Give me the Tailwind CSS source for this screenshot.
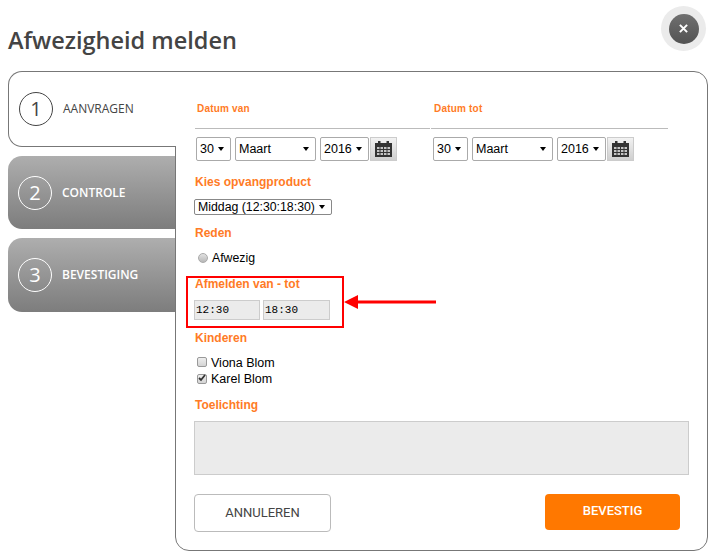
<!DOCTYPE html>
<html lang="en">
<head>
  <meta charset="UTF-8" />
  <title>Afwezigheid melden</title>
  <script src="https://cdn.jsdelivr.net/npm/@tailwindcss/browser@4"></script>
</head>
<body class="bg-white h-[558px] w-[709px] overflow-hidden relative font-['Liberation_Sans',sans-serif] text-black">

  <!-- Close button -->
  <button class="absolute left-[661px] top-[6px] w-[45px] h-[45px] rounded-full bg-[#ebebeb] flex items-center justify-center">
    <span class="w-[30px] h-[30px] rounded-full bg-gradient-to-b from-[#707070] to-[#525252] flex items-center justify-center">
      <svg class="w-[9px] h-[9px]" viewBox="0 0 10 10" fill="none" stroke="#fff" stroke-width="2.2"><path d="M1 1l8 8M9 1l-8 8" /></svg>
    </span>
  </button>

  <h1 class="pl-2 pt-[24px] h-[71px] font-['Open_Sans',sans-serif] text-[23.5px] leading-[32px] font-semibold text-[#444]">Afwezigheid melden</h1>

  <div class="flex pl-2">
    <!-- Steps -->
    <div class="w-[167px] shrink-0 relative z-10">
      <div class="h-[76px] -mb-px w-[168px] flex items-center gap-[10px] pl-[10px] bg-white border border-r-0 border-[#777] rounded-l-[14px] rounded-tr-none">
        <span class="w-[34px] h-[34px] rounded-full border border-[#444] flex items-center justify-center font-['Open_Sans',sans-serif] text-[20px] text-[#444]">1</span>
        <span class="font-['Open_Sans',sans-serif] text-[12px] text-[#444]">AANVRAGEN</span>
      </div>
      <div class="mt-[10px] h-[73px] flex items-center gap-[10px] pl-[10px] rounded-l-[14px] bg-gradient-to-b from-[#aeaeae] to-[#7d7d7d]">
        <span class="w-[34px] h-[34px] rounded-full border border-white flex items-center justify-center font-['Open_Sans',sans-serif] text-[20px] text-white">2</span>
        <span class="font-['Open_Sans',sans-serif] text-[12px] font-semibold text-white">CONTROLE</span>
      </div>
      <div class="mt-[9px] h-[74px] flex items-center gap-[10px] pl-[10px] rounded-l-[14px] bg-gradient-to-b from-[#aeaeae] to-[#7d7d7d]">
        <span class="w-[34px] h-[34px] rounded-full border border-white flex items-center justify-center font-['Open_Sans',sans-serif] text-[20px] text-white">3</span>
        <span class="font-['Open_Sans',sans-serif] text-[12px] font-semibold text-white">BEVESTIGING</span>
      </div>
    </div>

    <!-- Form panel -->
    <div class="relative w-[533px] h-[480px] border border-[#777] rounded-[14px] rounded-tl-none pl-[18px]">

      <!-- Dates -->
      <div class="flex mt-[28px]">
        <div class="w-[235px] mr-px ml-px">
          <div class="h-[29px] pl-[2px] pt-[1px] border-b border-[#bbb] text-[10px] leading-[16px] font-bold tracking-[0.2px] text-[#ff7b26]">Datum van</div>
          <div class="flex items-center mt-[8px] pl-px">
            <span class="relative block">
              <select disabled class="appearance-none opacity-100 block w-[35px] h-[24px] border border-[#aaa] rounded-[2px] bg-white text-[12.5px] text-black pl-[3px]"><option>30</option></select>
              <svg class="absolute right-[7px] top-[10px] w-[6px] h-[4px]" viewBox="0 0 6 4"><path d="M0 0h6L3 4z" /></svg>
            </span>
            <span class="relative block ml-[4px]">
              <select disabled class="appearance-none opacity-100 block w-[81px] h-[24px] border border-[#aaa] rounded-[2px] bg-white text-[12.5px] text-black pl-[3px]"><option>Maart</option></select>
              <svg class="absolute right-[7px] top-[10px] w-[6px] h-[4px]" viewBox="0 0 6 4"><path d="M0 0h6L3 4z" /></svg>
            </span>
            <span class="relative block ml-[4px]">
              <select disabled class="appearance-none opacity-100 block w-[49px] h-[24px] border border-[#aaa] rounded-[2px] bg-white text-[12.5px] text-black pl-[3px]"><option>2016</option></select>
              <svg class="absolute right-[7px] top-[10px] w-[6px] h-[4px]" viewBox="0 0 6 4"><path d="M0 0h6L3 4z" /></svg>
            </span>
            <span class="ml-[1px] w-[27px] h-[24px] -mt-[1px] border border-[#ccc] bg-gradient-to-b from-[#f2f2f2] to-[#cfcfcf] flex items-center justify-center">
              <svg class="w-[17px] h-[16px]" viewBox="0 0 17 16"><path fill="#333" d="M0 2h17v14H0z" /><path fill="#333" d="M3 0h2.500v3H3zM11.500 0H14v3h-2.500z" /><path fill="#c4c4c4" d="M2 6h2.500v2H2zM5.500 6H8v2H5.500zM9 6h2.500v2H9zM12.500 6H15v2h-2.500zM2 9h2.500v2H2zM5.500 9H8v2H5.500zM9 9h2.500v2H9zM12.500 9H15v2h-2.500zM2 12h2.500v2H2zM5.500 12H8v2H5.500zM9 12h2.500v2H9zM12.500 12H15v2h-2.500z" /></svg>
            </span>
          </div>
        </div>
        <div class="w-[237px]">
          <div class="h-[29px] pl-[3px] pt-[1px] border-b border-[#bbb] text-[10px] leading-[16px] font-bold tracking-[0.2px] text-[#ff7b26]">Datum tot</div>
          <div class="flex items-center mt-[8px] pl-[2px]">
            <span class="relative block">
              <select disabled class="appearance-none opacity-100 block w-[35px] h-[24px] border border-[#aaa] rounded-[2px] bg-white text-[12.5px] text-black pl-[3px]"><option>30</option></select>
              <svg class="absolute right-[7px] top-[10px] w-[6px] h-[4px]" viewBox="0 0 6 4"><path d="M0 0h6L3 4z" /></svg>
            </span>
            <span class="relative block ml-[4px]">
              <select disabled class="appearance-none opacity-100 block w-[81px] h-[24px] border border-[#aaa] rounded-[2px] bg-white text-[12.5px] text-black pl-[3px]"><option>Maart</option></select>
              <svg class="absolute right-[7px] top-[10px] w-[6px] h-[4px]" viewBox="0 0 6 4"><path d="M0 0h6L3 4z" /></svg>
            </span>
            <span class="relative block ml-[4px]">
              <select disabled class="appearance-none opacity-100 block w-[49px] h-[24px] border border-[#aaa] rounded-[2px] bg-white text-[12.5px] text-black pl-[3px]"><option>2016</option></select>
              <svg class="absolute right-[7px] top-[10px] w-[6px] h-[4px]" viewBox="0 0 6 4"><path d="M0 0h6L3 4z" /></svg>
            </span>
            <span class="ml-[1px] w-[27px] h-[24px] -mt-[1px] border border-[#ccc] bg-gradient-to-b from-[#f2f2f2] to-[#cfcfcf] flex items-center justify-center">
              <svg class="w-[17px] h-[16px]" viewBox="0 0 17 16"><path fill="#333" d="M0 2h17v14H0z" /><path fill="#333" d="M3 0h2.500v3H3zM11.500 0H14v3h-2.500z" /><path fill="#c4c4c4" d="M2 6h2.500v2H2zM5.500 6H8v2H5.500zM9 6h2.500v2H9zM12.500 6H15v2h-2.500zM2 9h2.500v2H2zM5.500 9H8v2H5.500zM9 9h2.500v2H9zM12.500 9H15v2h-2.500zM2 12h2.500v2H2zM5.500 12H8v2H5.500zM9 12h2.500v2H9zM12.500 12H15v2h-2.500z" /></svg>
            </span>
          </div>
        </div>
      </div>

      <!-- Product -->
      <div class="mt-[13px] pl-px text-[12px] leading-[16px] font-bold text-[#ff7b26]">Kies opvangproduct</div>
      <span class="relative block w-[138px] mt-[9px]">
        <select disabled class="appearance-none opacity-100 block w-[138px] h-[16px] border border-[#888] rounded-[2px] bg-white text-[12.3px] leading-[14px] text-black pl-[3px]"><option>Middag (12:30:18:30)</option></select>
        <svg class="absolute right-[7px] top-[6px] w-[6px] h-[4px]" viewBox="0 0 6 4"><path d="M0 0h6L3 4z" /></svg>
      </span>

      <!-- Reason -->
      <div class="mt-[10px] pl-px text-[12px] leading-[16px] font-bold text-[#ff7b26]">Reden</div>
      <label class="flex items-center h-[16px] mt-[9px] pl-[4px] text-[12.3px] text-black">
        <input type="radio" disabled class="appearance-none m-0 w-[10px] h-[10px] mr-[4px] -mt-px rounded-full border border-[#aaa] bg-gradient-to-b from-[#e2e2e2] to-[#b8b8b8]" />
        Afwezig
      </label>

      <!-- Times -->
      <div class="mt-[10px] pl-px text-[12px] leading-[16px] font-bold text-[#ff7b26]">Afmelden van - tot</div>
      <div class="flex gap-[3px] mt-[8px]">
        <input disabled value="12:30" class="w-[66px] h-[20px] border border-[#ccc] bg-[#ebebeb] pl-px font-['Liberation_Mono',monospace] text-[11px] text-black opacity-100" />
        <input disabled value="18:30" class="w-[67px] h-[20px] border border-[#ccc] bg-[#ebebeb] pl-px font-['Liberation_Mono',monospace] text-[11px] text-black opacity-100" />
      </div>

      <!-- Children -->
      <div class="mt-[10px] pl-px text-[12px] leading-[16px] font-bold text-[#ff7b26]">Kinderen</div>
      <label class="flex items-center h-[16px] mt-[9px] pl-[3px] text-[12.5px] text-black">
        <input type="checkbox" disabled class="appearance-none m-0 w-[10px] h-[10px] mr-[4px] -mt-[2px] rounded-[2px] border border-[#999] bg-gradient-to-b from-[#eee] to-[#d4d4d4]" />
        Viona Blom
      </label>
      <label class="relative flex items-center h-[16px] pl-[3px] text-[12.5px] text-black">
        <input type="checkbox" checked disabled class="appearance-none m-0 w-[10px] h-[10px] mr-[4px] -mt-px rounded-[2px] border border-[#999] bg-gradient-to-b from-[#eee] to-[#d4d4d4]" />
        <svg class="absolute left-[4px] top-[3px] w-[8px] h-[8px]" viewBox="0 0 8 8" fill="none" stroke="#333" stroke-width="1.800"><path d="M1 4l2 2 4-5" /></svg>
        Karel Blom
      </label>

      <!-- Remark -->
      <div class="mt-[10px] pl-px text-[12px] leading-[16px] font-bold text-[#ff7b26]">Toelichting</div>
      <textarea disabled class="block mt-[8px] w-[495px] h-[54px] border border-[#ccc] bg-[#ebebeb] resize-none"></textarea>

      <!-- Actions -->
      <div class="flex items-start justify-between w-[486px] mt-[19px]">
        <button class="w-[137px] h-[38px] border border-[#bbb] rounded-[4px] bg-white font-['Roboto',sans-serif] text-[13px] text-[#444]">ANNULEREN</button>
        <button class="w-[135px] h-[36px] pb-[3px] rounded-[4px] bg-[#ff7800] font-['Roboto',sans-serif] text-[13px] font-medium text-white">BEVESTIG</button>
      </div>

      <!-- Annotation -->
      <div class="absolute left-[10px] top-[204px] w-[158px] h-[52px] border-[2px] border-[#f00]"></div>
      <svg class="absolute left-[167px] top-[220px] w-[94px] h-[20px]" viewBox="0 0 94 20"><path fill="#f00" d="M1 10l14-7v5.500h78v3H15V17z" /></svg>
    </div>
  </div>
</body>
</html>
